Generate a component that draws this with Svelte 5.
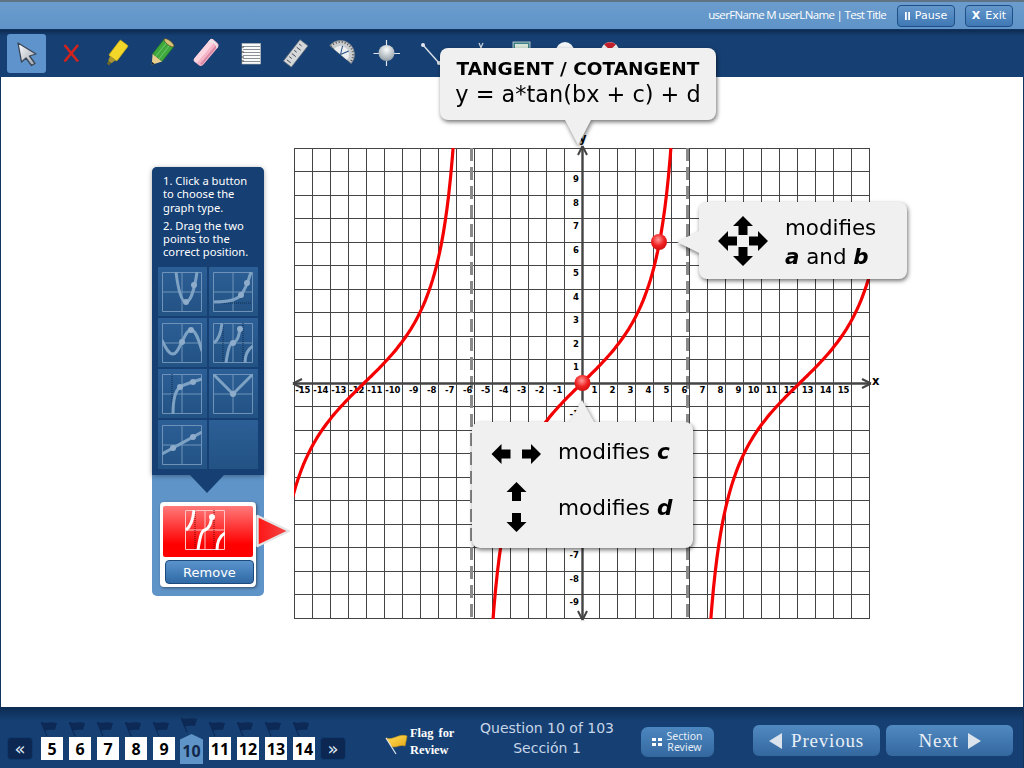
<script>
  const xs = 17.97, ys = 23.5, ox = 287.5, oy = 235, a = 2.85;
  const cols = Array.from({ length: 33 }, (_, i) => i - 16);
  const rows = Array.from({ length: 21 }, (_, i) => i - 10);
  const xLabels = cols.filter((v) => v !== 0 && Math.abs(v) <= 15);
  const yLabels = rows.filter((v) => v !== 0 && Math.abs(v) <= 9 && (v > -2 || v < -6));
  const px = (v) => Math.round(ox + v * xs) + 0.5;
  const py = (v) => Math.floor(oy - v * ys) + 0.5;

  function branch(c) {
    const pts = [];
    for (let u = -5.3; u <= 5.3; u += 0.1) {
      const y = a * Math.tan((Math.PI * u) / 12);
      pts.push(`${(288 + (c + u) * 18).toFixed(1)},${(oy - y * ys).toFixed(1)}`);
    }
    return 'M' + pts.join(' L');
  }
  const curves = [-12.1, 0, 12.1].map(branch);

  const thumbs = [
    { d: 'M14 0C16 16 19 30 24 30C29 30 33 14 35 0', pts: [[32, 13], [24, 30]] },
    { d: 'M1 30C14 30 24 28 28 23C32 18 35 10 38 0', pts: [[28, 23], [34, 11]], dot: 'M1 31H39' },
    { d: 'M0 17C4 26 7 31 11 31C15 31 17 24 20 19C23 13 25 7 29 7C34 7 37 18 40 28', pts: [[20, 19], [29, 7]] },
    { d: 'M1 20C5 17 8 10 9 0M13 40C15 26 17 20 20 20C25 18 26 12 27 6M32 40C32 32 35 26 40 23', pts: [[20, 20], [27, 6]], dot: 'M10 0V40M30 0V40' },
    { d: 'M11 40C11 25 14 16 18 13C23 10 30 8 40 5', pts: [[18, 13], [31, 8]], dot: 'M10 0V40' },
    { d: 'M0 0L20 20L40 0', pts: [[20, 20]] },
    { d: 'M0 29L40 7', pts: [[11, 23], [31, 12]] },
    null
  ];
  const pages = [5, 6, 7, 8, 9, 10, 11, 12, 13, 14];
  const tools = ['arrow', 'x', 'marker', 'pencil', 'eraser', 'notes', 'ruler', 'protractor', 'point', 'line', 'cut', 'calc', 'ball', 'red'];
</script>

{#snippet arrowUp(x, y, r)}
  <polygon class="blk" transform="translate({x} {y}) rotate({r})" points="0,-10 10,0 4.5,0 4.5,9 -4.5,9 -4.5,0 -10,0" />
{/snippet}

<div class="page">
  <header class="top">
    <span class="user">userFName M userLName | Test Title</span>
    <button class="topbtn pause"><svg width="5" height="8" viewBox="0 0 5 8"><path d="M0 0H1.8V8H0ZM3.2 0H5V8H3.2Z" fill="#fff" /></svg>Pause</button>
    <button class="topbtn exit"><b>X</b>Exit</button>
  </header>

  <nav class="tools">
    {#each tools as t, i}
      <div class="tool" class:sel={i === 0}>
        <svg width="39" height="39" viewBox="0 0 39 39">
          {#if t === 'arrow'}
            <defs><linearGradient id="garrow" x1="0" y1="0" x2="1" y2="1"><stop offset="0" stop-color="#ffffff" /><stop offset="1" stop-color="#9aa4ae" /></linearGradient></defs>
            <polygon points="11,9 29,20 22.5,22 28,29.5 24.5,31.5 19,24 14.5,28" fill="url(#garrow)" stroke="#3a4656" stroke-width="1.3" stroke-linejoin="round" />
          {:else if t === 'x'}
            <path d="M12.5 11L26 27.5M26 11L12.5 27.5" stroke="#d3241c" stroke-width="2.6" />
          {:else if t === 'marker'}
            <g transform="rotate(37 19 19)">
              <rect x="14.5" y="6" width="10" height="19" rx="1" fill="#f2d62a" stroke="#c9a914" stroke-width=".7" />
              <polygon points="16,25 23,25 21.5,30 17.5,30" fill="#a7962f" />
              <rect x="18" y="30" width="3" height="3" fill="#6d6a22" />
            </g>
          {:else if t === 'pencil'}
            <g transform="rotate(38 19 19)">
              <rect x="13" y="6" width="12" height="19" fill="#3fa93d" stroke="#257a25" stroke-width=".7" />
              <path d="M17 6V25M21 6V25" stroke="#6cc468" stroke-width="1" />
              <ellipse cx="19" cy="6" rx="6" ry="2.2" fill="#d8c27a" stroke="#5a4a1a" stroke-width=".6" />
              <polygon points="13,25 25,25 19,34" fill="#e8cf8e" />
              <polygon points="17.3,31.5 20.7,31.5 19,34" fill="#222" />
            </g>
          {:else if t === 'eraser'}
            <g transform="rotate(40 19 19)">
              <rect x="13.5" y="4" width="11" height="29" rx="3.5" fill="#f6b4c8" />
              <rect x="13.5" y="4" width="5" height="29" rx="2" fill="#fbd6e0" />
              <path d="M22.5 6V31" stroke="#d988a3" stroke-width="2" />
              <path d="M13.5 9Q19 4 24.5 9V7Q19 2 13.5 7Z" fill="#e8e8e8" />
            </g>
          {:else if t === 'notes'}
            <rect x="10" y="9.5" width="18.5" height="20.5" fill="#fafafa" stroke="#bbb" stroke-width=".6" />
            <path d="M11 12.5H28M11 15.5H28M11 18.5H28M11 21.5H28M11 24.5H28M11 27.5H28" stroke="#8a9097" stroke-width="1" />
            <path d="M9 13H12M9 18H12M9 23H12M9 27H12" stroke="#444" stroke-width="1" />
          {:else if t === 'ruler'}
            <g transform="rotate(38 19 19)">
              <rect x="14" y="6" width="10" height="27" fill="#d4d8db" stroke="#6d7379" stroke-width=".7" />
              <path d="M16 10H19M16 14H21M16 18H19M16 22H21M16 26H19M16 30H21" stroke="#333" stroke-width=".8" />
            </g>
          {:else if t === 'protractor'}
            <g transform="translate(18.5 20.5) rotate(40)">
              <path d="M-14 0A14 14 0 0 1 14 0Z" fill="#c9cdd0" stroke="#7b8085" stroke-width=".8" />
              <path d="M-8.5 0A8.5 8.5 0 0 1 8.5 0Z" fill="#eceeef" />
              <path d="M0 0L-4 -8M0 0L4 -8" stroke="#1d4f86" stroke-width="1" />
              <path d="M-12.5 0A12.5 12.5 0 0 1 12.5 0" fill="none" stroke="#555" stroke-width="2" stroke-dasharray="1 2" />
            </g>
          {:else if t === 'point'}
            <path d="M19.5 6V32M6.5 19.5H33" stroke="#dfe6ec" stroke-width="1.2" />
            <circle cx="19.5" cy="19" r="8" fill="url(#gball)" />
          {:else if t === 'line'}
            <path d="M11 11L27 29" stroke="#dfe6ec" stroke-width="1.3" />
            <circle cx="11" cy="11" r="2" fill="#dfe6ec" /><circle cx="27" cy="29" r="2" fill="#dfe6ec" />
          {:else if t === 'cut'}
            <path d="M26 9L20 22M22 9L25 16" stroke="#c9d2da" stroke-width="1.3" />
          {:else if t === 'calc'}
            <rect x="11" y="8" width="17" height="22" fill="#3f7f86" stroke="#cfd8dc" stroke-width=".8" />
            <rect x="13" y="10" width="13" height="5" fill="#d6e6d8" />
          {:else if t === 'ball'}
            <circle cx="18" cy="17" r="9" fill="#f2f4f6" />
          {:else}
            <circle cx="18" cy="17" r="9" fill="#efefef" />
            <path d="M12 10.5A9 9 0 0 1 24 10.5L18 16Z" fill="#c3202c" />
          {/if}
        </svg>
      </div>
    {/each}
  </nav>

  <main class="main">
    <aside class="panel">
      <div class="panel-dark">
        <p>1. Click a button<br />to choose the<br />graph type.</p>
        <p>2. Drag the two<br />points to the<br />correct position.</p>
        <div class="tiles">
          {#each thumbs as t}
            <div class="tile">
              {#if t}
                <svg width="40" height="40" viewBox="0 0 40 40">
                  <path class="thumb-grid" d="M.5 .5H39.5V39.5H.5ZM20 0V40M0 20H40" />
                  {#if t.dot}<path d={t.dot} class="thumb-dot" />{/if}
                  <path d={t.d} class="thumb-line" />
                  {#each t.pts as p}<circle cx={p[0]} cy={p[1]} r="3" class="thumb-pt" />{/each}
                </svg>
              {/if}
            </div>
          {/each}
        </div>
      </div>
      <div class="selected">
        <div class="red">
          <svg width="40" height="40" viewBox="0 0 40 40">
            <path class="sel-grid" d="M.5 .5H39.5V39.5H.5ZM20 0V40M0 20H40" />
            <path class="sel-dot" d="M10 0V40M29 0V40" />
            <path class="sel-line" d={thumbs[3].d} />
            <circle cx="27" cy="7" r="3" fill="#fff" />
          </svg>
        </div>
        <button class="remove">Remove</button>
      </div>
      <svg class="pointer" width="36" height="36" viewBox="0 0 36 36">
        <defs><linearGradient id="gred" x1="0" y1="0" x2="1" y2="0"><stop offset="0" stop-color="#ff1414" /><stop offset="1" stop-color="#f04a4a" /></linearGradient></defs>
        <polygon points="1.5,3 33,18 1.5,33" fill="url(#gred)" stroke="#e4e4e4" stroke-width="2.4" stroke-linejoin="round" />
      </svg>
    </aside>

    <div class="graph">
      <svg class="plot" width="576" height="471" viewBox="0 0 576 471">
        <defs>
          <clipPath id="clip"><rect x="0" y="0" width="576" height="471" /></clipPath>
          <radialGradient id="gpoint" cx=".45" cy=".35" r=".7"><stop offset="0" stop-color="#ff9a9a" /><stop offset=".55" stop-color="#f02020" /><stop offset="1" stop-color="#c81010" /></radialGradient>
          <radialGradient id="gball" cx=".5" cy=".3" r=".75"><stop offset="0" stop-color="#fafcfd" /><stop offset="1" stop-color="#8a979f" /></radialGradient>
        </defs>
        <g class="grid">
          {#each cols as c}<line x1={px(c)} x2={px(c)} y1="0" y2="471" />{/each}
          {#each rows as r}<line x1="0" x2="576" y1={py(r)} y2={py(r)} />{/each}
        </g>
        <path class="asym" d="M177.5 0V471M393.5 0V471" />
        <path class="axis" d="M0 235.5H576M288.5 0V471" />
        <path class="axis-head" d="M-1 235.5L8 231M-1 235.5L8 240M577 235.5L568 231M577 235.5L568 240M288.5 -2L284 7M288.5 -2L293 7M288.5 472L284 463M288.5 472L293 463" />
        {#each xLabels as v}<text class="lbl" x={px(v) - 2} y="245" text-anchor="end">{v}</text>{/each}
        {#each yLabels as v}<text class="lbl" x="285" y={py(v) + 10} text-anchor="end">{v}</text>{/each}
        <text class="lbl big" x="578" y="237">x</text>
        <text class="lbl big" x="285" y="-6">y</text>
        <g clip-path="url(#clip)">
          {#each curves as d}<path class="curve" {d} />{/each}
        </g>
        <circle cx="288.5" cy="235" r="8" fill="url(#gpoint)" />
        <circle cx="365" cy="94" r="8" fill="url(#gpoint)" />
      </svg>
    </div>

    <div class="bubble b-top">
      <strong>TANGENT / COTANGENT</strong>
      <span>y = a*tan(bx + c) + d</span>
      <i class="tail tail-down"></i>
    </div>

    <div class="bubble b-ab">
      <svg class="move" width="52" height="52" viewBox="0 0 52 52">
        {@render arrowUp(26, 11, 0)}{@render arrowUp(26, 41, 180)}{@render arrowUp(11, 26, -90)}{@render arrowUp(41, 26, 90)}
      </svg>
      <div class="ab-text">modifies<br /><em>a</em> and <em>b</em></div>
      <i class="tail tail-left"></i>
    </div>

    <div class="bubble b-cd">
      <i class="tail tail-up"></i>
      <div class="row">
        <svg class="ico" width="52" height="24" viewBox="0 0 52 24">
          {@render arrowUp(11.5, 14, -90)}{@render arrowUp(41, 14, 90)}
        </svg>
        <span>modifies <em>c</em></span>
      </div>
      <div class="row">
        <svg class="ico" width="52" height="54" viewBox="0 0 52 54">
          {@render arrowUp(26.5, 12, 0)}{@render arrowUp(26.5, 42, 180)}
        </svg>
        <span>modifies <em>d</em></span>
      </div>
    </div>
  </main>

  <footer class="bottom">
    <button class="jump">«</button>
    <div class="pager">
      {#each pages as p}
        <div class="cell" class:cur={p === 10}>
          <svg class="flag" width="20" height="16" viewBox="0 0 20 16">
            <path d="M0 1C5 3 9 0 16 2L14 9C9 8 6 10 3 9Z" fill="#0d2a57" />
            <path d="M0 1L6 15" stroke="#0d2a57" stroke-width="1.2" />
          </svg>
          <div class="num">{p}</div>
        </div>
      {/each}
    </div>
    <button class="jump next">»</button>

    <div class="flagrev">
      <svg width="24" height="22" viewBox="0 0 24 22">
        <defs><linearGradient id="gflag" x1="0" y1="0" x2="1" y2="1"><stop offset="0" stop-color="#ffe05a" /><stop offset="1" stop-color="#e8a818" /></linearGradient></defs>
        <path d="M1 5C8 8 14 0 22 3L20 13C14 11 10 16 6 13Z" fill="url(#gflag)" stroke="#c99a1a" stroke-width=".7" />
        <path d="M1 5L11 21" stroke="#dde3ea" stroke-width="1.2" />
      </svg>
      <span>Flag for<br />Review</span>
    </div>

    <div class="qinfo">Question 10 of 103<br />Sección 1</div>

    <button class="secrev">
      <svg width="11" height="9" viewBox="0 0 11 9"><path d="M0 0H4V3H0ZM6 0H10V3H6ZM0 5H4V8H0ZM6 5H10V8H6Z" fill="#fff" /></svg>
      <span>Section<br />Review</span>
    </button>

    <button class="nav prev"><i class="tri left"></i>Previous</button>
    <button class="nav nx">Next<i class="tri right"></i></button>
  </footer>
</div>

<style>
  :global(body) { margin: 0; }
  * { box-sizing: border-box; }
  button { font: inherit; padding: 0; cursor: pointer; }

  .page {
    position: relative;
    width: 1024px;
    height: 768px;
    display: flex;
    flex-direction: column;
    overflow: hidden;
    background: #fff;
    font-family: "DejaVu Sans", sans-serif;
  }

  .top {
    height: 30px;
    flex: none;
    display: flex;
    align-items: center;
    justify-content: flex-end;
    padding: 1px 11px 0 0;
    background: linear-gradient(#6b9ccd, #5f94c8);
    border-top: 2px solid #5f7384;
    border-bottom: 1px solid #12345f;
  }
  .user {
    font-family: "Open Sans", sans-serif;
    font-size: 11.5px;
    letter-spacing: -0.66px;
    color: #fff;
    margin-right: 11px;
    margin-top: -4px;
  }
  .topbtn {
    height: 22px;
    margin-top: -1px;
    display: flex;
    align-items: center;
    justify-content: center;
    gap: 5px;
    color: #fff;
    font-size: 11px;
    font-family: "DejaVu Sans", sans-serif;
    background: linear-gradient(#6498cc, #3f78b4);
    border: 1px solid #1f4f86;
    border-radius: 4px;
  }
  .pause { width: 58px; margin-right: 10px; }
  .exit { width: 48px; }

  .tools {
    height: 47px;
    flex: none;
    display: flex;
    gap: 6px;
    padding: 4px 0 0 7px;
    background: linear-gradient(#0c2b52 0, #164073 6px);
  }
  .tool { width: 39px; height: 39px; border-radius: 3px; }
  .tool.sel { background: #5e93cb; }
  .tool svg { display: block; }

  .main {
    flex: 1;
    min-height: 0;
    display: flex;
    align-items: flex-start;
    padding-left: 151px;
    border-left: 1px solid #12345f;
    border-right: 1px solid #12345f;
  }

  .panel {
    position: relative;
    width: 112px;
    height: 429px;
    margin-top: 90px;
    background: #5f94c8;
    border-radius: 5px;
    flex: none;
  }
  .panel-dark {
    position: relative;
    height: 308px;
    padding: 7px 6px 0;
    background: #164073;
    border-radius: 5px 5px 0 0;
    box-shadow: 0 1px 5px rgba(0, 0, 0, .35);
  }
  .panel-dark::after {
    content: "";
    position: absolute;
    left: 38px;
    bottom: -18px;
    border-left: 17px solid transparent;
    border-right: 17px solid transparent;
    border-top: 18px solid #164073;
  }
  .panel-dark p {
    margin: 0 0 5px 5px;
    color: #fff;
    font: 11.2px/13.3px "Noto Sans", sans-serif;
    white-space: nowrap;
  }
  .tiles {
    display: grid;
    grid-template-columns: 49px 49px;
    grid-auto-rows: 49px;
    gap: 2px;
    margin-top: 8px;
  }
  .tile {
    background: linear-gradient(#2c5f96, #235284);
    padding: 5px 0 0 4px;
  }
  .tile svg { display: block; }
  .thumb-grid { fill: none; stroke: #6f93b8; stroke-width: 1; }
  .thumb-dot { fill: none; stroke: #0f2a4f; stroke-width: 1; stroke-dasharray: 1 1; }
  .thumb-line { fill: none; stroke: #7ea2c4; stroke-width: 3; }
  .thumb-pt { fill: #8fadca; }

  .selected {
    position: absolute;
    left: 8px;
    top: 335px;
    width: 96px;
    height: 85px;
    padding: 4px 3px 3px;
    background: #fff;
    border-radius: 4px;
    box-shadow: 1px 1px 3px rgba(0, 0, 0, .45);
  }
  .red {
    height: 51px;
    padding: 4px 0 0 22px;
    background: linear-gradient(#ff7a7a, #ff0000 75%);
    border-radius: 2px;
  }
  .red svg { display: block; }
  .sel-grid { fill: none; stroke: #ffc4c4; stroke-width: 1; }
  .sel-dot { fill: none; stroke: #7a0000; stroke-width: 1; stroke-dasharray: 1 1; }
  .sel-line { fill: none; stroke: #fff; stroke-width: 3; }
  .remove {
    display: block;
    width: 89px;
    height: 24px;
    margin: 3px 0 0 2px;
    color: #fff;
    font-size: 13px;
    font-family: "DejaVu Sans", sans-serif;
    background: linear-gradient(#5b93cc, #2f6aa6);
    border: 1px solid #1d4a7e;
    border-radius: 4px;
  }
  .pointer {
    position: absolute;
    left: 104px;
    top: 346px;
  }

  .graph {
    width: 576px;
    height: 471px;
    margin: 71px 0 0 30px;
    flex: none;
  }
  .plot { display: block; overflow: visible; }
  .grid line { stroke: #444; stroke-width: 1; shape-rendering: crispEdges; }
  .asym { fill: none; stroke: #8a8a8a; stroke-width: 3; stroke-dasharray: 13 6; }
  .axis { fill: none; stroke: #444; stroke-width: 2.4; }
  .axis-head { fill: none; stroke: #444; stroke-width: 2; }
  .lbl { font: bold 8.5px "DejaVu Sans", sans-serif; fill: #000; }
  .big { font-size: 11.5px; }
  .curve { fill: none; stroke: #f40000; stroke-width: 3.2; }

  .bubble {
    position: absolute;
    background: #f0f0f0;
    border-radius: 8px;
    filter: drop-shadow(1px 2px 2px rgba(0, 0, 0, .55));
    color: #000;
    z-index: 2;
  }
  .blk { fill: #000; }
  .tail { position: absolute; width: 0; height: 0; display: block; }
  .b-top {
    left: 440px;
    top: 48px;
    width: 276px;
    height: 72px;
    display: flex;
    flex-direction: column;
    align-items: center;
    padding-top: 8px;
  }
  .b-top strong { font-size: 18.5px; line-height: 25px; font-weight: 700; }
  .b-top span { font-size: 22.4px; line-height: 27px; }
  .tail-down {
    left: 125px;
    top: 72px;
    border-left: 13px solid transparent;
    border-right: 13px solid transparent;
    border-top: 25px solid #f0f0f0;
  }
  .b-ab {
    left: 699px;
    top: 202px;
    width: 208px;
    height: 77px;
    display: flex;
    align-items: center;
    padding-left: 18px;
  }
  .move { flex: none; margin-right: 16px; }
  .ab-text { font-size: 21.4px; line-height: 29px; margin-top: 3px; }
  em { font-style: italic; font-weight: 700; }
  .tail-left {
    left: -22px;
    top: 29px;
    border-top: 11px solid transparent;
    border-bottom: 11px solid transparent;
    border-right: 22px solid #f0f0f0;
  }
  .b-cd {
    left: 472px;
    top: 422px;
    width: 221px;
    height: 126px;
    padding-top: 17px;
  }
  .tail-up {
    left: 98px;
    top: -22px;
    border-left: 12px solid transparent;
    border-right: 12px solid transparent;
    border-bottom: 22px solid #f0f0f0;
  }
  .row {
    display: flex;
    align-items: center;
    font-size: 21.6px;
    padding-left: 18px;
  }
  .row + .row { margin-top: 16px; }
  .ico { flex: none; margin-right: 16px; }

  .bottom {
    height: 61px;
    flex: none;
    display: flex;
    align-items: flex-start;
    padding-left: 7px;
    background: linear-gradient(#0c2b52 0, #164073 14px);
    border-right: 1px solid #12345f;
  }
  .jump {
    width: 26px;
    height: 23px;
    margin-top: 30px;
    flex: none;
    color: #dfe8f2;
    font-size: 18px;
    line-height: 18px;
    font-family: "DejaVu Sans", sans-serif;
    background: #0b2752;
    border: 1px solid #0f3a6e;
    border-radius: 4px;
  }
  .jump.next { margin-left: 5px; }
  .pager { display: flex; gap: 6px; margin: 14px 0 0 8px; }
  .cell { width: 22px; display: flex; flex-direction: column; }
  .flag { display: block; }
  .num {
    height: 23px;
    background: #fff;
    color: #000;
    font: 700 16px/24px "Open Sans", "DejaVu Sans", sans-serif;
    text-align: center;
  }
  .cur .flag { margin-top: -4px; margin-bottom: 1px; }
  .cur .num {
    height: 30px;
    width: 23px;
    margin-left: -1px;
    padding-top: 5px;
    background: #5f94c8;
    color: #12294c;
    clip-path: polygon(50% 0, 100% 18%, 100% 100%, 0 100%, 0 18%);
  }

  .flagrev {
    display: flex;
    align-items: flex-start;
    margin: 18px 0 0 39px;
    width: 93px;
    flex: none;
  }
  .flagrev svg { flex: none; margin-top: 8px; }
  .flagrev span {
    color: #fff;
    font: 700 12.4px/16.5px "Liberation Serif", serif;
    word-spacing: 2px;
    margin-left: 1px;
  }
  .qinfo {
    width: 142px;
    margin: 11px 0 0 -2px;
    text-align: center;
    color: #c6d5e7;
    font-size: 14px;
    line-height: 20px;
    flex: none;
  }
  .secrev {
    width: 73px;
    height: 30px;
    margin: 20px 0 0 23px;
    flex: none;
    display: flex;
    align-items: center;
    justify-content: center;
    gap: 3px;
    color: #fff;
    background: linear-gradient(#4d87c0, #33689f);
    border: none;
    border-radius: 7px;
  }
  .secrev span { font: 10.5px/11.5px "Noto Sans", sans-serif; color: #e4edf6; }
  .nav {
    width: 127px;
    height: 31px;
    margin-top: 18px;
    flex: none;
    display: flex;
    align-items: center;
    justify-content: center;
    gap: 9px;
    color: #e8eff7;
    font: 19px "Liberation Serif", serif;
    letter-spacing: .8px;
    background: linear-gradient(#5189c1, #33689f);
    border: none;
    border-radius: 6px;
  }
  .prev { margin-left: 39px; }
  .nx { margin-left: 6px; }
  .tri { width: 0; height: 0; border-top: 8px solid transparent; border-bottom: 8px solid transparent; }
  .tri.left { border-right: 13px solid #dbe3ec; }
  .tri.right { border-left: 13px solid #dbe3ec; }
</style>
